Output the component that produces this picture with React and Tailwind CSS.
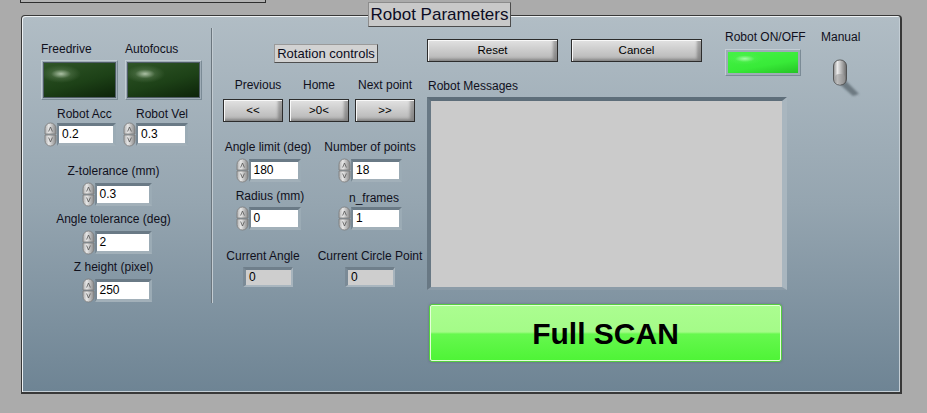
import React from 'react';

function Label({ children, className = '' }) {
  return <div className={`text-[12px] leading-[14px] text-[#10101c] whitespace-nowrap ${className}`}>{children}</div>;
}

function Spinner() {
  return (
    <svg width="13" height="25" viewBox="0 0 13 25" className="shrink-0">
      <defs>
        <linearGradient id="spin" x1="0" x2="1">
          <stop offset="0" stopColor="#b0b0b0" />
          <stop offset="0.35" stopColor="#e8e8e8" />
          <stop offset="1" stopColor="#888888" />
        </linearGradient>
      </defs>
      <path d="M1 12 V6.5 A5.5 5.5 0 0 1 12 6.5 V12 Z" fill="url(#spin)" stroke="#7a7a7a" strokeWidth="0.8" />
      <path d="M1 13 V18.5 A5.5 5.5 0 0 0 12 18.5 V13 Z" fill="url(#spin)" stroke="#7a7a7a" strokeWidth="0.8" />
      <path d="M4.6 9.5 L6.5 5 L8.4 9.5" fill="none" stroke="#555" strokeWidth="0.8" />
      <path d="M4.6 15.5 L6.5 20 L8.4 15.5" fill="none" stroke="#555" strokeWidth="0.8" />
    </svg>
  );
}

function Numeric({ value, w }) {
  return (
    <div className="flex h-[25px] items-center">
      <Spinner />
      <div className="border-t-[3px] border-l-[2px] border-r-[3px] border-b-[3px] border-t-[#6a7a86] border-l-[#788894] border-r-[#9babb5] border-b-[#a2b0b9]">
        <div className={`${w} h-[17px] bg-white pl-[3px] text-[12px] leading-[17px] text-black`}>{value}</div>
      </div>
    </div>
  );
}

function Indicator({ value }) {
  return (
    <div className="mt-[4px] border-t-[3px] border-l-[3px] border-r-[2px] border-b-[2px] border-t-[#6f7f8b] border-l-[#7a8a96] border-r-[#a7b4bd] border-b-[#a9b6bf]">
      <div className="h-[15px] w-[45px] bg-[#cecece] pl-[3px] text-[12px] leading-[15px] text-black">{value}</div>
    </div>
  );
}

function Button({ children, className = '' }) {
  return (
    <div
      className={`flex h-[23px] items-center justify-center border border-[#2c2c2c] bg-[linear-gradient(#e2e2e2,#c6c6c6_60%,#b4b4b4)] text-[11.5px] text-black shadow-[inset_1px_1px_0_#f8f8f8,inset_-4px_-2px_3px_rgba(0,0,0,0.28)] ${className}`}
    >
      {children}
    </div>
  );
}

function DarkLed() {
  return (
    <div className="mt-[4px] h-[40px] w-[77px] border border-t-[#c3cdd4] border-l-[#c3cdd4] border-r-[#7b8b96] border-b-[#7b8b96] bg-[#9eacb6] p-px">
      <div className="h-full w-full border border-[#4f5c66] bg-[radial-gradient(ellipse_20px_9px_at_24%_32%,rgba(205,222,198,0.8),rgba(100,132,92,0.4)_50%,transparent),linear-gradient(165deg,#2f5527,#1d4117_55%,#0c2309)]" />
    </div>
  );
}

function Toggle() {
  return (
    <svg width="32" height="42" viewBox="0 0 32 42" className="ml-[11px] mt-[13px] overflow-visible">
      <defs>
        <linearGradient id="lever" x1="0" x2="1">
          <stop offset="0" stopColor="#8a8a8a" />
          <stop offset="0.3" stopColor="#ececec" />
          <stop offset="1" stopColor="#6a6a6a" />
        </linearGradient>
        <filter id="soft">
          <feGaussianBlur stdDeviation="1.3" />
        </filter>
      </defs>
      <path d="M4 24 L14 24 L27 37 L21 39 Z" fill="#46525a" opacity="0.6" filter="url(#soft)" />
      <rect x="1.5" y="3" width="13" height="25" rx="6" fill="url(#lever)" stroke="#444" strokeWidth="0.8" />
      <rect x="3" y="17" width="10" height="10" rx="4" fill="#9a9a9a" opacity="0.6" />
    </svg>
  );
}

export default function App() {
  return (
    <div className="h-[413px] w-[927px] overflow-hidden bg-[#ababab] font-['Liberation_Sans',Arial,sans-serif]">
      <div className="ml-[20px] h-[3px] w-[246px] border-x border-b border-[#2e2e2e] bg-[#b3b3b3]" />

      <div className="relative ml-[21px] mt-[12px] flex h-[379px] w-[881px] rounded-t-[4px] border-t border-l border-r-2 border-b-2 border-[#383838] bg-[linear-gradient(#b1bdc5,#95a5b0_50%,#6e8494)] shadow-[inset_1px_1px_0_#eef2f4,inset_-1px_-1px_0_#c4ced5]">
        {/* title */}
        <div className="absolute left-[346px] top-[-14px] flex h-[25px] w-[143px] items-center justify-center border border-[#8c8c8c] border-r-[#4c4c4c] border-b-[#4c4c4c] bg-[#c9c9c9] text-[17px] text-[#0c0c24]">
          Robot Parameters
        </div>

        {/* left column */}
        <div className="w-[189px] shrink-0">
          <div className="mt-[26px] flex gap-[7px] pl-[19px]">
            <div className="flex flex-col">
              <Label>Freedrive</Label>
              <DarkLed />
            </div>
            <div className="flex flex-col">
              <Label>Autofocus</Label>
              <DarkLed />
            </div>
          </div>

          <div className="mt-[7px] flex gap-[7px] pl-[22px]">
            <div className="flex flex-col">
              <Label className="pl-[13px]">Robot Acc</Label>
              <div className="mt-[1px]">
                <Numeric value="0.2" w="w-[54px]" />
              </div>
            </div>
            <div className="flex flex-col">
              <Label className="pl-[13px]">Robot Vel</Label>
              <div className="mt-[1px]">
                <Numeric value="0.3" w="w-[47px]" />
              </div>
            </div>
          </div>

          <div className="mt-[17px] flex flex-col items-center pr-[6px]">
            <Label>Z-tolerance (mm)</Label>
            <div className="mt-[4px] pl-[6px]">
              <Numeric value="0.3" w="w-[52px]" />
            </div>
            <Label className="mt-[5px]">Angle tolerance (deg)</Label>
            <div className="mt-[4px] pl-[6px]">
              <Numeric value="2" w="w-[52px]" />
            </div>
            <Label className="mt-[5px]">Z height (pixel)</Label>
            <div className="mt-[4px] pl-[6px]">
              <Numeric value="250" w="w-[52px]" />
            </div>
          </div>
        </div>

        {/* divider */}
        <div className="mt-[12px] h-[275px] w-[2px] shrink-0 border-l border-r border-l-[#6b767e] border-r-[#c3ccd2]" />

        {/* middle column */}
        <div className="w-[212px] shrink-0">
          <div className="ml-[61px] mt-[28px] flex h-[19px] w-[104px] items-center justify-center border border-[#9a9a9a] border-r-[#4e4e4e] border-b-[#4e4e4e] bg-[#d2d2d2] text-[13px] text-[#0c0c1c]">
            Rotation controls
          </div>

          <div className="ml-[10px] mt-[15px] flex gap-[6px]">
            <div className="flex w-[60px] flex-col items-center">
              <Label className="pl-[10px]">Previous</Label>
              <Button className="mt-[7px] w-[60px]">&lt;&lt;</Button>
            </div>
            <div className="flex w-[60px] flex-col items-center">
              <Label>Home</Label>
              <Button className="mt-[7px] w-[60px]">&gt;0&lt;</Button>
            </div>
            <div className="flex w-[60px] flex-col items-center">
              <Label>Next point</Label>
              <Button className="mt-[7px] w-[60px]">&gt;&gt;</Button>
            </div>
          </div>

          <div className="ml-[5px] mt-[18px] grid w-[202px] grid-cols-[100px_100px] gap-x-[2px]">
            <div className="flex flex-col items-center">
              <Label>Angle limit (deg)</Label>
              <div className="mt-[4px]">
                <Numeric value="180" w="w-[47px]" />
              </div>
              <Label className="mt-[6px] pl-[4px]">Radius (mm)</Label>
              <div className="mt-[3px]">
                <Numeric value="0" w="w-[47px]" />
              </div>
              <Label className="mt-[18px] pr-[10px]">Current Angle</Label>
              <Indicator value="0" />
            </div>
            <div className="flex flex-col items-center">
              <Label>Number of points</Label>
              <div className="mt-[4px]">
                <Numeric value="18" w="w-[46px]" />
              </div>
              <Label className="mt-[8px] h-[12px] pl-[8px]">n_frames</Label>
              <div className="mt-[3px]">
                <Numeric value="1" w="w-[46px]" />
              </div>
              <Label className="mt-[18px]">Current Circle Point</Label>
              <Indicator value="0" />
            </div>
          </div>
        </div>

        {/* right column */}
        <div className="flex-1">
          <div className="mt-[14px] flex h-[49px] items-start">
            <Button className="ml-[2px] mt-[9px] w-[131px]">Reset</Button>
            <Button className="ml-[13px] mt-[9px] w-[131px]">Cancel</Button>
            <div className="ml-[23px] flex w-[80px] flex-col">
              <Label>Robot ON/OFF</Label>
              <div className="mt-[5px] h-[27px] w-[76px] border border-t-[#c3cdd4] border-l-[#c3cdd4] border-r-[#7b8b96] border-b-[#7b8b96] bg-[#9eacb6] p-[2px]">
                <div className="h-full w-full bg-[radial-gradient(ellipse_18px_6px_at_24%_32%,rgba(190,255,190,0.8),rgba(90,240,90,0.3)_55%,transparent),linear-gradient(170deg,#46f246,#38ea38_60%,#25c425)]" />
              </div>
            </div>
            <div className="ml-[16px] flex flex-col">
              <Label>Manual</Label>
              <Toggle />
            </div>
          </div>

          <Label className="ml-[3px]">Robot Messages</Label>
          <div className="ml-[2px] mt-[4px] h-[193px] w-[360px] border-t-[4px] border-l-[4px] border-r-[5px] border-b-[3px] border-t-[#5e6e7a] border-l-[#687884] border-r-[#a9b6bf] border-b-[#8c9ca8] bg-[#cbcbcb]" />

          <div className="ml-[4px] mt-[14px] h-[58px] w-[353px] rounded-[3px] border border-[#54cf3e] shadow-[0_0_2px_rgba(60,70,80,0.5)]">
            <div className="flex h-full items-center justify-center rounded-[2px] border border-[#e4ffd8] bg-[linear-gradient(#abfd90,#a4fb88_48%,#66f84e_52%,#4ff437)] text-[30px] font-bold text-black">
              Full SCAN
            </div>
          </div>
        </div>
      </div>
    </div>
  );
}
